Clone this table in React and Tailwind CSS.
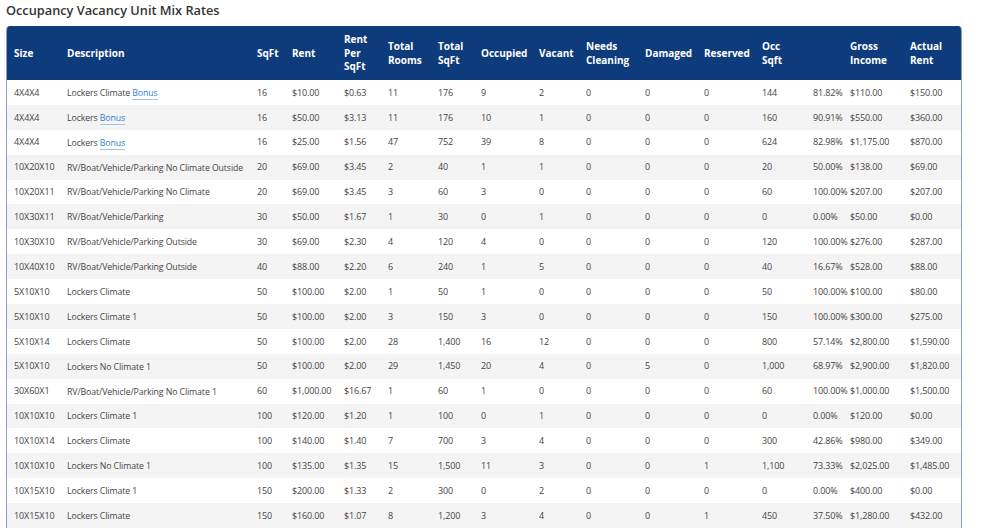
import React from "react";

const columns = [
  { label: ["Size"], w: 53 },
  { label: ["Description"], w: 190 },
  { label: ["SqFt"], w: 35 },
  { label: ["Rent"], w: 52 },
  { label: ["Rent", "Per", "SqFt"], w: 44 },
  { label: ["Total", "Rooms"], w: 50 },
  { label: ["Total", "SqFt"], w: 43 },
  { label: ["Occupied"], w: 58 },
  { label: ["Vacant"], w: 47 },
  { label: ["Needs", "Cleaning"], w: 59 },
  { label: ["Damaged"], w: 59 },
  { label: ["Reserved"], w: 58 },
  { label: ["Occ", "Sqft"], w: 51 },
  { label: [""], w: 37 },
  { label: ["Gross", "Income"], w: 60 },
  { label: ["Actual", "Rent"], w: 60 },
];

const rows = [
  ["4X4X4", "Lockers Climate", true, "16", "$10.00", "$0.63", "11", "176", "9", "2", "0", "0", "0", "144", "81.82%", "$110.00", "$150.00"],
  ["4X4X4", "Lockers", true, "16", "$50.00", "$3.13", "11", "176", "10", "1", "0", "0", "0", "160", "90.91%", "$550.00", "$360.00"],
  ["4X4X4", "Lockers", true, "16", "$25.00", "$1.56", "47", "752", "39", "8", "0", "0", "0", "624", "82.98%", "$1,175.00", "$870.00"],
  ["10X20X10", "RV/Boat/Vehicle/Parking No Climate Outside", false, "20", "$69.00", "$3.45", "2", "40", "1", "1", "0", "0", "0", "20", "50.00%", "$138.00", "$69.00"],
  ["10X20X11", "RV/Boat/Vehicle/Parking No Climate", false, "20", "$69.00", "$3.45", "3", "60", "3", "0", "0", "0", "0", "60", "100.00%", "$207.00", "$207.00"],
  ["10X30X11", "RV/Boat/Vehicle/Parking", false, "30", "$50.00", "$1.67", "1", "30", "0", "1", "0", "0", "0", "0", "0.00%", "$50.00", "$0.00"],
  ["10X30X10", "RV/Boat/Vehicle/Parking Outside", false, "30", "$69.00", "$2.30", "4", "120", "4", "0", "0", "0", "0", "120", "100.00%", "$276.00", "$287.00"],
  ["10X40X10", "RV/Boat/Vehicle/Parking Outside", false, "40", "$88.00", "$2.20", "6", "240", "1", "5", "0", "0", "0", "40", "16.67%", "$528.00", "$88.00"],
  ["5X10X10", "Lockers Climate", false, "50", "$100.00", "$2.00", "1", "50", "1", "0", "0", "0", "0", "50", "100.00%", "$100.00", "$80.00"],
  ["5X10X10", "Lockers Climate 1", false, "50", "$100.00", "$2.00", "3", "150", "3", "0", "0", "0", "0", "150", "100.00%", "$300.00", "$275.00"],
  ["5X10X14", "Lockers Climate", false, "50", "$100.00", "$2.00", "28", "1,400", "16", "12", "0", "0", "0", "800", "57.14%", "$2,800.00", "$1,590.00"],
  ["5X10X10", "Lockers No Climate 1", false, "50", "$100.00", "$2.00", "29", "1,450", "20", "4", "0", "5", "0", "1,000", "68.97%", "$2,900.00", "$1,820.00"],
  ["30X60X1", "RV/Boat/Vehicle/Parking No Climate 1", false, "60", "$1,000.00", "$16.67", "1", "60", "1", "0", "0", "0", "0", "60", "100.00%", "$1,000.00", "$1,500.00"],
  ["10X10X10", "Lockers Climate 1", false, "100", "$120.00", "$1.20", "1", "100", "0", "1", "0", "0", "0", "0", "0.00%", "$120.00", "$0.00"],
  ["10X10X14", "Lockers Climate", false, "100", "$140.00", "$1.40", "7", "700", "3", "4", "0", "0", "0", "300", "42.86%", "$980.00", "$349.00"],
  ["10X10X10", "Lockers No Climate 1", false, "100", "$135.00", "$1.35", "15", "1,500", "11", "3", "0", "0", "1", "1,100", "73.33%", "$2,025.00", "$1,485.00"],
  ["10X15X10", "Lockers Climate 1", false, "150", "$200.00", "$1.33", "2", "300", "0", "2", "0", "0", "0", "0", "0.00%", "$400.00", "$0.00"],
  ["10X15X10", "Lockers Climate", false, "150", "$160.00", "$1.07", "8", "1,200", "3", "4", "0", "0", "1", "450", "37.50%", "$1,280.00", "$432.00"],
];

export default function App() {
  return (
    <div
      className="w-[984px] h-[529px] overflow-hidden bg-white text-[#444]"
      style={{ fontFamily: '"Open Sans", "Noto Sans", sans-serif' }}
    >
      <h1 className="pl-[6px] pt-[1px] h-[26px] text-[12.75px] leading-[18px] font-semibold text-[#333]">
        Occupancy Vacancy Unit Mix Rates
      </h1>
      <div className="ml-[6px] w-[956px] rounded-t-[4px] border-x border-[#8fa0ba] overflow-hidden">
        <table className="w-full table-fixed border-collapse">
          <colgroup>
            {columns.map((c, i) => (
              <col key={i} style={{ width: c.w }} />
            ))}
          </colgroup>
          <thead>
            <tr className="bg-[#0d3b7b] text-white h-[54px]">
              {columns.map((c, i) => (
                <th
                  key={i}
                  className="pl-[7px] pr-0 pt-[1px] text-left align-middle text-[10px] leading-[13.5px] font-bold"
                >
                  {c.label.map((l, j) => (
                    <div key={j}>{l}</div>
                  ))}
                </th>
              ))}
            </tr>
          </thead>
          <tbody>
            {rows.map((r, i) => (
              <tr
                key={i}
                className={i % 2 === 0 ? "bg-white h-[24.9px]" : "bg-[#f4f4f4] h-[24.9px]"}
              >
                <td className="pl-[7px] text-[9px] tracking-[-0.1px] whitespace-nowrap">{r[0]}</td>
                <td className="pl-[7px] pt-[2px] text-[8.75px] tracking-[-0.1px] whitespace-nowrap">
                  {r[1]}
                  {r[2] && (
                    <>
                      {" "}
                      <span className="text-[#2f7fd0] border-b border-[#9cc3ea]">Bonus</span>
                    </>
                  )}
                </td>
                {r.slice(3).map((v, j) => (
                  <td key={j} className="pl-[7px] text-[9px] tracking-[-0.15px] whitespace-nowrap">
                    {v}
                  </td>
                ))}
              </tr>
            ))}
          </tbody>
        </table>
      </div>
    </div>
  );
}
